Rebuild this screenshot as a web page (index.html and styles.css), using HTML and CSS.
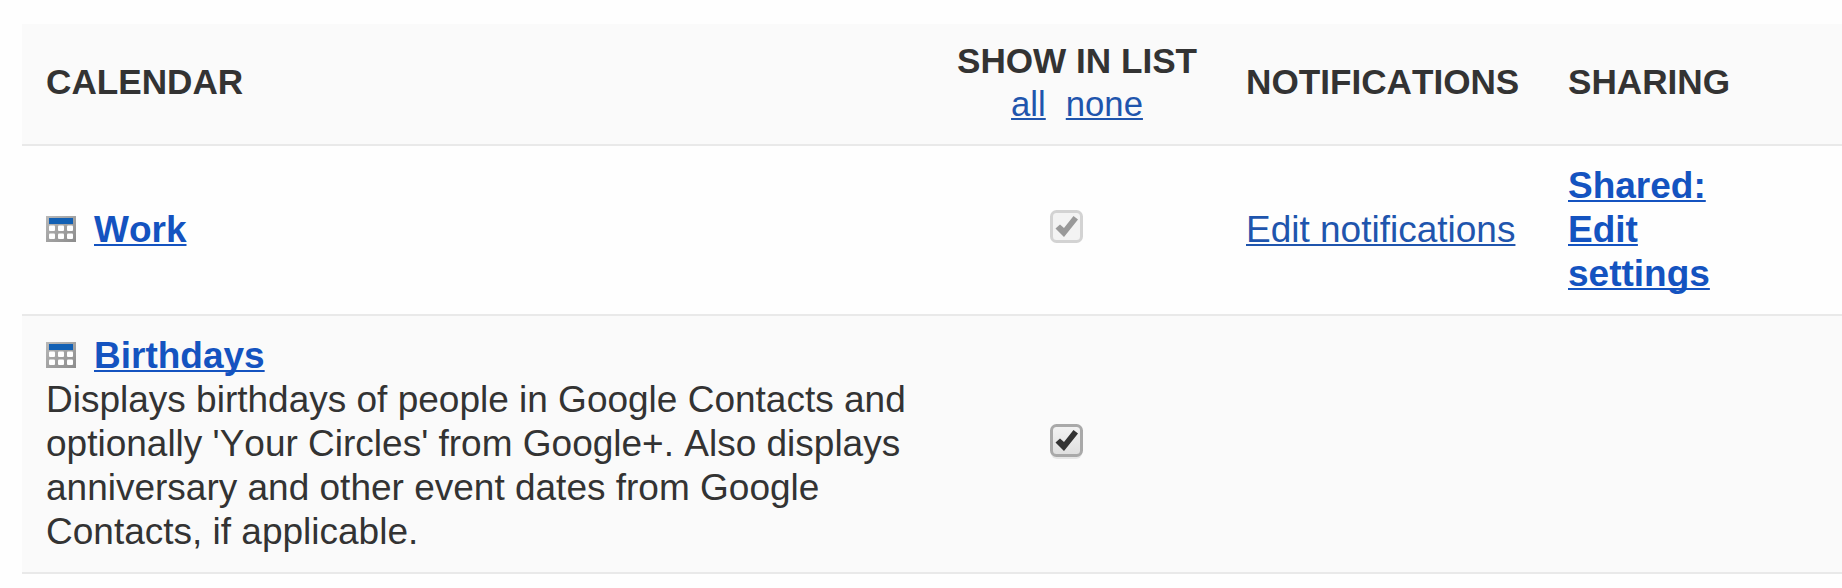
FILE: index.html
```html
<!DOCTYPE html>
<html lang="en">
<head>
<meta charset="utf-8">
<title>Calendars</title>
<link rel="stylesheet" href="styles.css">
</head>
<body>
<svg class="defs" width="0" height="0">
  <defs>
    <linearGradient id="frame" x1="0" y1="0" x2="1" y2="1"><stop offset="0" stop-color="#b8b8b8"/><stop offset="1" stop-color="#8c8c8c"/></linearGradient>
    <linearGradient id="box" x1="0" y1="0" x2="0" y2="1"><stop offset="0" stop-color="#f3f3f3"/><stop offset="1" stop-color="#dedede"/></linearGradient>
    <symbol id="calendar" viewBox="0 0 30 26">
      <rect width="30" height="26" fill="url(#frame)"/>
      <rect x="3" y="2" width="24" height="6" fill="#1260b4"/>
      <g fill="#fff">
        <rect x="3" y="9.5" width="6" height="5.5" rx="1"/><rect x="12" y="9.5" width="6" height="5.5" rx="1"/><rect x="21" y="9.5" width="6" height="5.5" rx="1"/>
        <rect x="3" y="17.5" width="6" height="5.5" rx="1"/><rect x="12" y="17.5" width="6" height="5.5" rx="1"/><rect x="21" y="17.5" width="6" height="5.5" rx="1"/>
      </g>
    </symbol>
  </defs>
</svg>
<div class="table">
  <div class="row head">
    <div class="name title">CALENDAR</div>
    <div class="show"><div class="title">SHOW IN LIST</div><div class="pick"><a href="#">all</a><a href="#">none</a></div></div>
    <div class="title">NOTIFICATIONS</div>
    <div class="title">SHARING</div>
  </div>
  <div class="row">
    <div class="name"><svg class="icon"><use href="#calendar"/></svg><a class="strong" href="#">Work</a></div>
    <div class="check"><svg width="34" height="36" viewBox="0 0 34 36"><rect x="1.5" y="1.5" width="30" height="30" rx="5" fill="#f3f3f3" stroke="#d3d3d3" stroke-width="3"/><path d="M5.5 18.5 L10 14.5 L14 18 L23.5 6 L28 9.5 L14 27 Z" fill="#999"/></svg></div>
    <div><a href="#">Edit notifications</a></div>
    <div class="sharing"><a class="strong" href="#">Shared: Edit settings</a></div>
  </div>
  <div class="row alt">
    <div class="name"><svg class="icon"><use href="#calendar"/></svg><a class="strong" href="#">Birthdays</a>
      <p class="desc">Displays birthdays of people in Google Contacts and optionally 'Your Circles' from Google+. Also displays anniversary and other event dates from Google Contacts, if applicable.</p></div>
    <div class="check"><svg width="34" height="36" viewBox="0 0 34 36"><rect x="1" y="4" width="31" height="31" rx="6" fill="#e6e6e6"/><rect x="1.5" y="1.5" width="30" height="30" rx="5" fill="url(#box)" stroke="#a9a9a9" stroke-width="3"/><path d="M5.5 18.5 L10 14.5 L14 18 L23.5 6 L28 9.5 L14 27 Z" fill="#333"/></svg></div>
    <div></div>
    <div></div>
  </div>
</div>
</body>
</html>
```
FILE: styles.css
```css
body {
  margin: 0;
  padding: 24px 0 0 22px;
  height: 564px;
  overflow: hidden;
  background: #fefefe;
  color: #333;
  font: 37px/44px "Liberation Sans", Arial, sans-serif;
  font-kerning: none;
}
.defs { display: block; height: 0; }
.row {
  display: grid;
  grid-template-columns: 911px 289px 322px 298px;
  align-items: center;
  padding: 18px 0;
  border-bottom: 2px solid #e9e9e9;
}
.row > div { padding-left: 24px; }
.head, .alt { background: #fafafa; }
.row.head {
  padding: 16px 0 19px;
  font-size: 34.7px;
  line-height: 42px;
}
.title { font-size: 35.15px; font-weight: bold; white-space: nowrap; }
.row > .title { padding-bottom: 2px; }
.row > .show { width: 242px; padding-left: 23px; text-align: center; }
.pick { display: flex; justify-content: center; gap: 20px; margin-top: 1px; }
.row > .check { padding: 0 0 4px 117px; height: 36px; line-height: 0; }
a {
  color: #1f55ad;
  text-decoration: underline 2px;
  text-underline-offset: 2px;
  text-decoration-skip-ink: none;
}
.strong { color: #1453c0; font-weight: bold; }
.icon { width: 30px; height: 26px; margin-right: 18px; }
.desc { margin: 0; width: 870px; }
.row > .sharing { width: 160px; }
```
